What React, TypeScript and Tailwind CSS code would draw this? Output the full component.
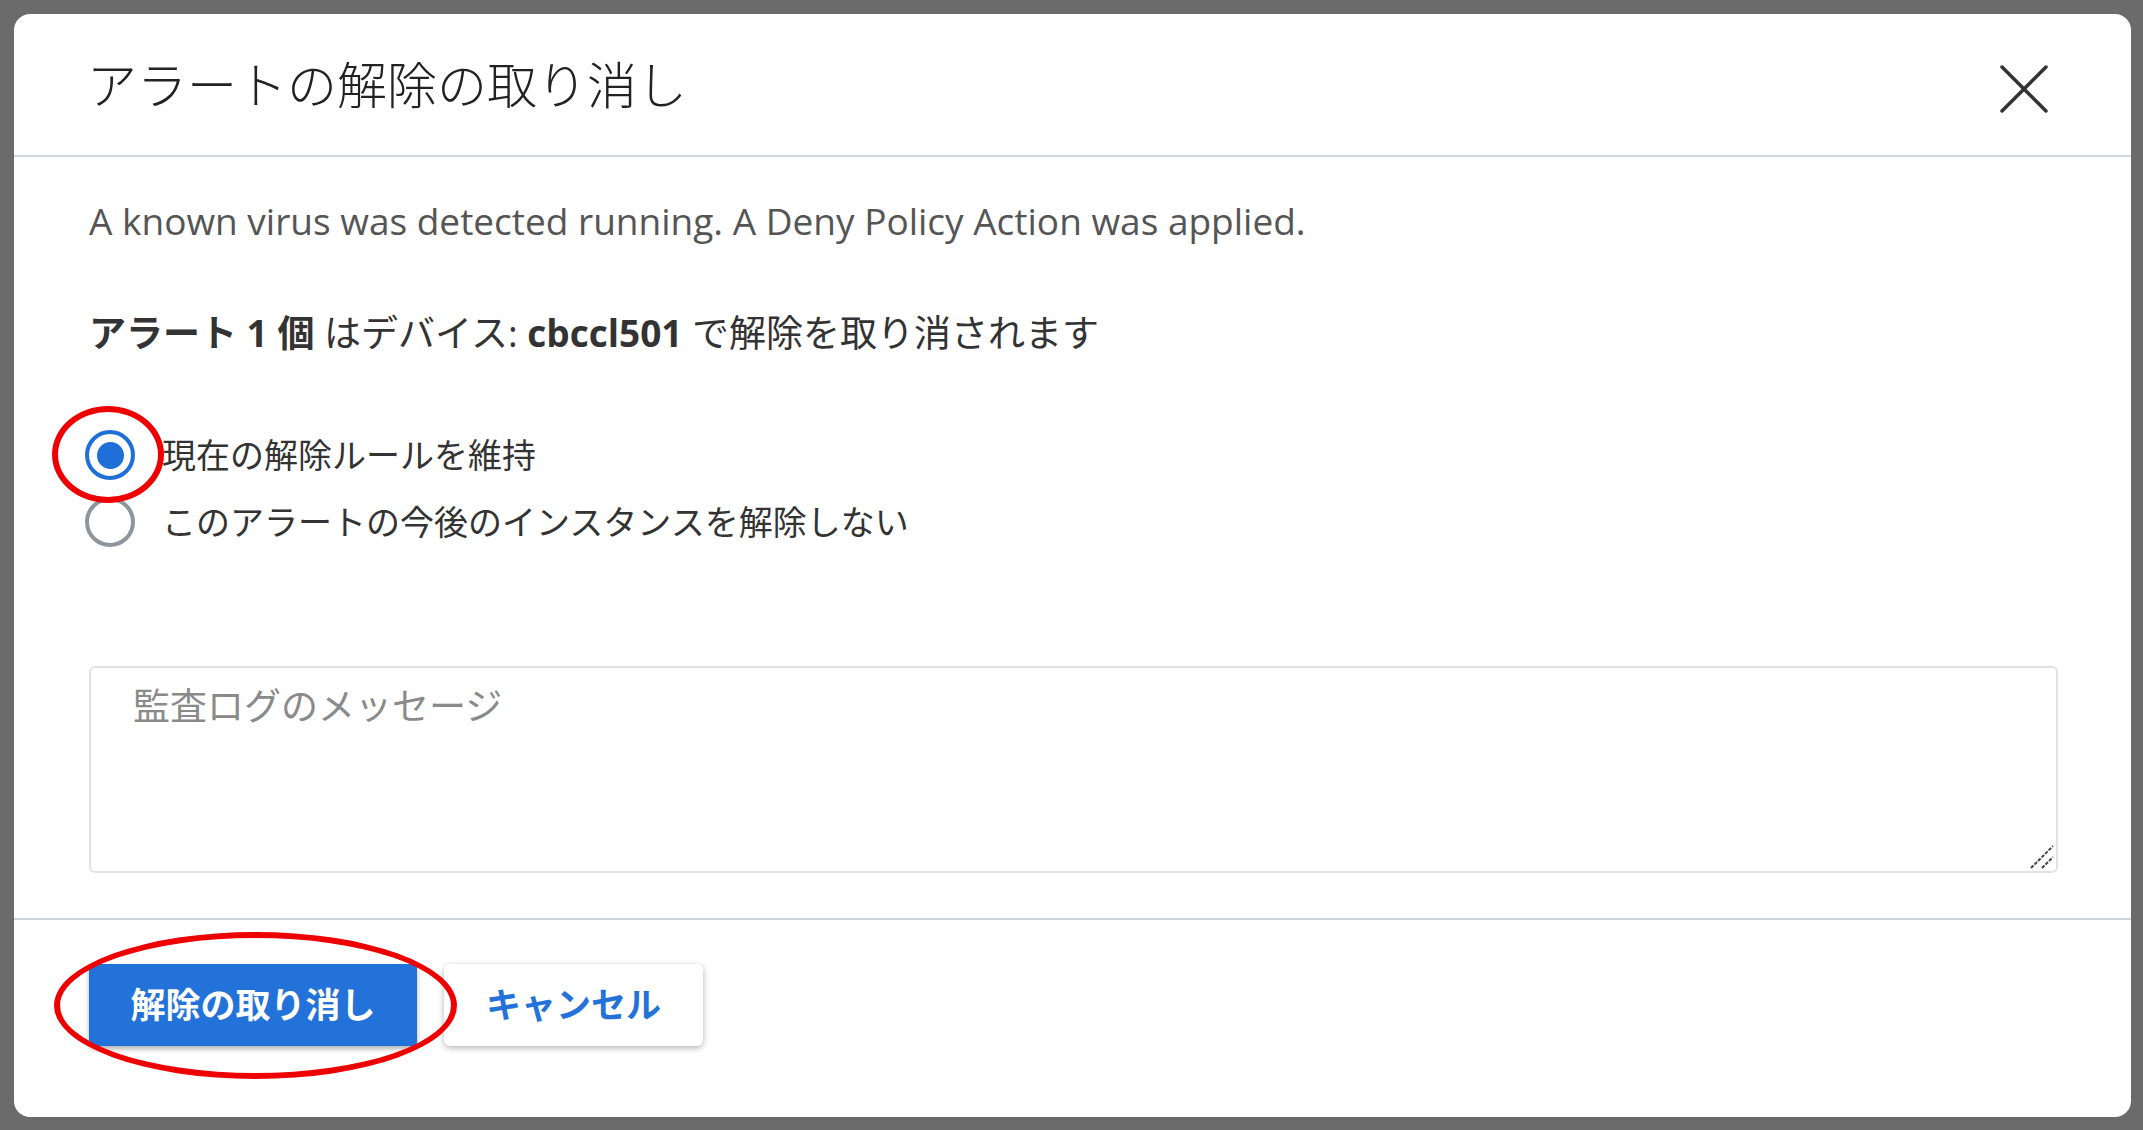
import { useState } from "react"

const JP = "font-['Open_Sans','Noto_Sans_CJK_JP',sans-serif]"

function Radio({ checked, label, onClick }: { checked: boolean; label: string; onClick: () => void }) {
  return (
    <button onClick={onClick} className="flex h-[60px] items-center gap-[27px] text-left">
      <span
        className={`flex h-[50px] w-[50px] shrink-0 items-center justify-center rounded-full border-[4px] ${
          checked ? "border-[#1f6fd8]" : "border-[#8d969c]"
        }`}
      >
        {checked && <span className="h-[27px] w-[27px] rounded-full bg-[#1f6fd8]" />}
      </span>
      <span className="text-[34px] leading-[44px] text-[#333]">{label}</span>
    </button>
  )
}

export default function App() {
  const [keep, setKeep] = useState(true)

  return (
    <div className={`relative h-[1130px] w-[2143px] overflow-hidden bg-[#6b6b6b] pl-[14px] pt-[14px] ${JP}`}>

      {/* Dialog */}
      <div className="flex h-[1103px] w-[2117px] flex-col rounded-[16px] bg-white">

        {/* Header */}
        <div className="flex h-[141px] items-center justify-between pl-[73px] pr-[83px]">
          <h1 className="text-[50px] font-light leading-[60px] text-[#222]">
            アラートの解除の取り消し
          </h1>
          <svg width="48" height="48" viewBox="0 0 48 48" className="mt-[8px]">
            <path d="M2 2 L46 46 M46 2 L2 46" stroke="#333" strokeWidth="3.5" strokeLinecap="round" />
          </svg>
        </div>

        <div className="h-[2px] bg-[#cdd6dc]" />

        {/* Body */}
        <div className="flex flex-col pb-[45px] pl-[75px] pr-[73px] pt-[38px]">
          <p className="text-[37px] leading-[52px] text-[#555]">
            A known virus was detected running. A Deny Policy Action was applied.
          </p>

          <p className="mt-[60px] text-[37px] leading-[52px] text-[#333]">
            <span className="font-bold">アラート 1 個</span> はデバイス: <span className="font-bold">cbccl501</span> で解除を取り消されます
          </p>

          <div className="ml-[-4px] mt-[66px] flex flex-col gap-[7px]">
            <Radio checked={keep} label="現在の解除ルールを維持" onClick={() => setKeep(true)} />
            <Radio checked={!keep} label="このアラートの今後のインスタンスを解除しない" onClick={() => setKeep(false)} />
          </div>

          <div className="relative mt-[114px]">
            <textarea
              placeholder="監査ログのメッセージ"
              className="block h-[207px] w-full resize-none rounded-[6px] border-[2px] border-[#e2e2e2] px-[42px] py-[14px] text-[37px] leading-[48px] text-[#333] outline-none placeholder:text-[#8a8a8a]"
            />
            <svg width="26" height="26" viewBox="0 0 26 26" className="absolute bottom-[3px] right-[3px]">
              <path d="M2 24 L24 2 M13 24 L24 13" stroke="#444" strokeWidth="2" strokeDasharray="3.5 1.5" />
            </svg>
          </div>
        </div>

        <div className="h-[2px] bg-[#cdd6dc]" />

        {/* Footer */}
        <div className="flex gap-[27px] pl-[75px] pt-[44px]">
          <button className="h-[82px] w-[328px] rounded-[4px] bg-[#2272d9] text-[35px] font-bold text-white shadow-[0_3px_5px_rgba(0,0,0,0.3)]">
            解除の取り消し
          </button>
          <button className="h-[82px] w-[259px] rounded-[6px] bg-white text-[35px] font-bold text-[#2272d9] shadow-[0_2px_6px_rgba(0,0,0,0.3)]">
            キャンセル
          </button>
        </div>
      </div>

      {/* Annotations */}
      <div className="pointer-events-none absolute left-[52px] top-[406px] h-[97px] w-[112px] rounded-[50%] border-[6px] border-[#ee0000]" />
      <div className="pointer-events-none absolute left-[54px] top-[932px] h-[147px] w-[403px] rounded-[50%] border-[6px] border-[#ee0000]" />
    </div>
  )
}
